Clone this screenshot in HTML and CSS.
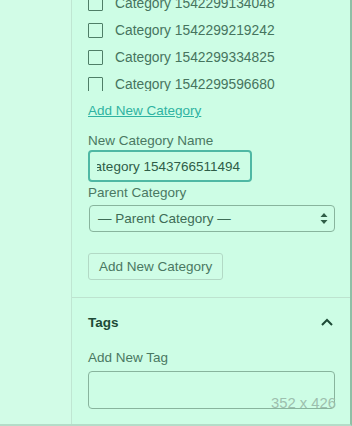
FILE: index.html
```html
<!DOCTYPE html>
<html>
<head>
    <meta charset="UTF-8">
    <title>Categories and Tags</title>
    <link rel="stylesheet" href="styles.css">
</head>
<body>
<div id="screen">
    <div id="sidebar"></div>
    <div id="panel">
        <div class="section">
            <div id="category-list">
                <div class="cat-rows">
                    <label class="cat-row"><span class="box"></span>Category 1542299134048</label>
                    <label class="cat-row"><span class="box"></span>Category 1542299219242</label>
                    <label class="cat-row"><span class="box"></span>Category 1542299334825</label>
                    <label class="cat-row"><span class="box"></span>Category 1542299596680</label>
                </div>
            </div>
            <a id="add-link" href="#">Add New Category</a>
            <div class="label">New Category Name</div>
            <div id="name-input"><div class="field-text"><span>Category 1543766511494</span><span class="caret"></span></div></div>
            <div class="label">Parent Category</div>
            <div id="parent-select">
                <span>— Parent Category —</span>
                <svg class="arrows" width="8" height="13" viewBox="0 0 8 13"><path d="M4 1 L7.5 5 L0.5 5 Z M4 12 L7.5 8 L0.5 8 Z" fill="#2e5e47"/></svg>
            </div>
            <button id="add-button">Add New Category</button>
        </div>
        <div class="section tags">
            <div class="tags-head">
                <span>Tags</span>
                <svg width="14" height="10" viewBox="0 0 14 10"><path d="M2 8 L7 3 L12 8" stroke="#1d4a36" stroke-width="2" fill="none"/></svg>
            </div>
            <div class="label">Add New Tag</div>
            <div id="tag-input"></div>
        </div>
    </div>
    <div id="size-mark">352 x 426</div>
</div>
</body>
</html>
```

FILE: styles.css
```css
body {
    margin: 0px;
    font-family: 'Liberation Sans', Arial, sans-serif;
    font-size: 13.5px;
    color: #4a7862;
    background-color: #cdfde5;
}
#screen {
    position: relative;
    display: flex;
    width: 352px;
    height: 426px;
    box-sizing: border-box;
    border-right: 2px solid #8fbfa6;
    border-bottom: 2px solid #b4dcc8;
    overflow: hidden;
}
#sidebar {
    width: 71px;
    flex-shrink: 0;
    background-color: #d2fce7;
    border-right: 1px solid #bfe6d2;
}
#panel {
    flex: 1;
}
.section {
    padding: 0px 15px 17px 16px;
    border-bottom: 1px solid #bde3cf;
}
#category-list {
    height: 91px;
    overflow: hidden;
}
.cat-rows {
    margin-top: -10px;
}
.cat-row {
    display: flex;
    align-items: center;
    height: 27px;
    font-size: 13.8px;
    color: #46745e;
}
.box {
    width: 13px;
    height: 13px;
    border: 1.5px solid #4f7e67;
    border-radius: 1px;
    margin-right: 12px;
}
#add-link {
    display: block;
    margin-top: 10px;
    line-height: 20px;
    color: #2fb3a2;
    text-decoration: underline;
}
.label {
    line-height: 18px;
    margin-top: 11px;
}
#name-input {
    width: 164px;
    height: 32px;
    box-sizing: border-box;
    border: 2px solid #4fb8a4;
    border-radius: 4px;
    padding: 0px 9px 0px 7px;
    color: #2f5d48;
}
.field-text {
    display: flex;
    justify-content: flex-end;
    align-items: center;
    height: 100%;
    overflow: hidden;
    white-space: nowrap;
}
.caret {
    width: 1px;
    height: 17px;
    background-color: #2f5d48;
    margin-left: 1px;
}
#name-input + .label {
    margin-top: 2px;
}
#parent-select {
    display: flex;
    justify-content: space-between;
    align-items: center;
    width: 246px;
    height: 27px;
    box-sizing: border-box;
    margin: 3px 0px 0px 1px;
    padding: 0px 6px 0px 8px;
    border: 1px solid #88b49d;
    border-radius: 4px;
    color: #3e6c56;
}
#add-button {
    display: block;
    margin-top: 21px;
    height: 27px;
    padding: 0px 10px;
    font-family: inherit;
    font-size: 13.5px;
    color: #4a7862;
    background-color: #cffde6;
    border: 1px solid #b2d9c5;
    border-radius: 3px;
}
.tags {
    border-bottom: none;
}
.tags-head {
    display: flex;
    justify-content: space-between;
    align-items: center;
    height: 48px;
    font-weight: bold;
    color: #1d4a36;
    padding-right: 1px;
}
.tags .label {
    margin-top: 3px;
}
#tag-input {
    width: 247px;
    height: 38px;
    box-sizing: border-box;
    margin-top: 4px;
    border: 1px solid #88b49d;
    border-radius: 4px;
}
#size-mark {
    position: absolute;
    left: 271px;
    top: 395px;
    font-size: 14.8px;
    color: #9dbfae;
}
```
